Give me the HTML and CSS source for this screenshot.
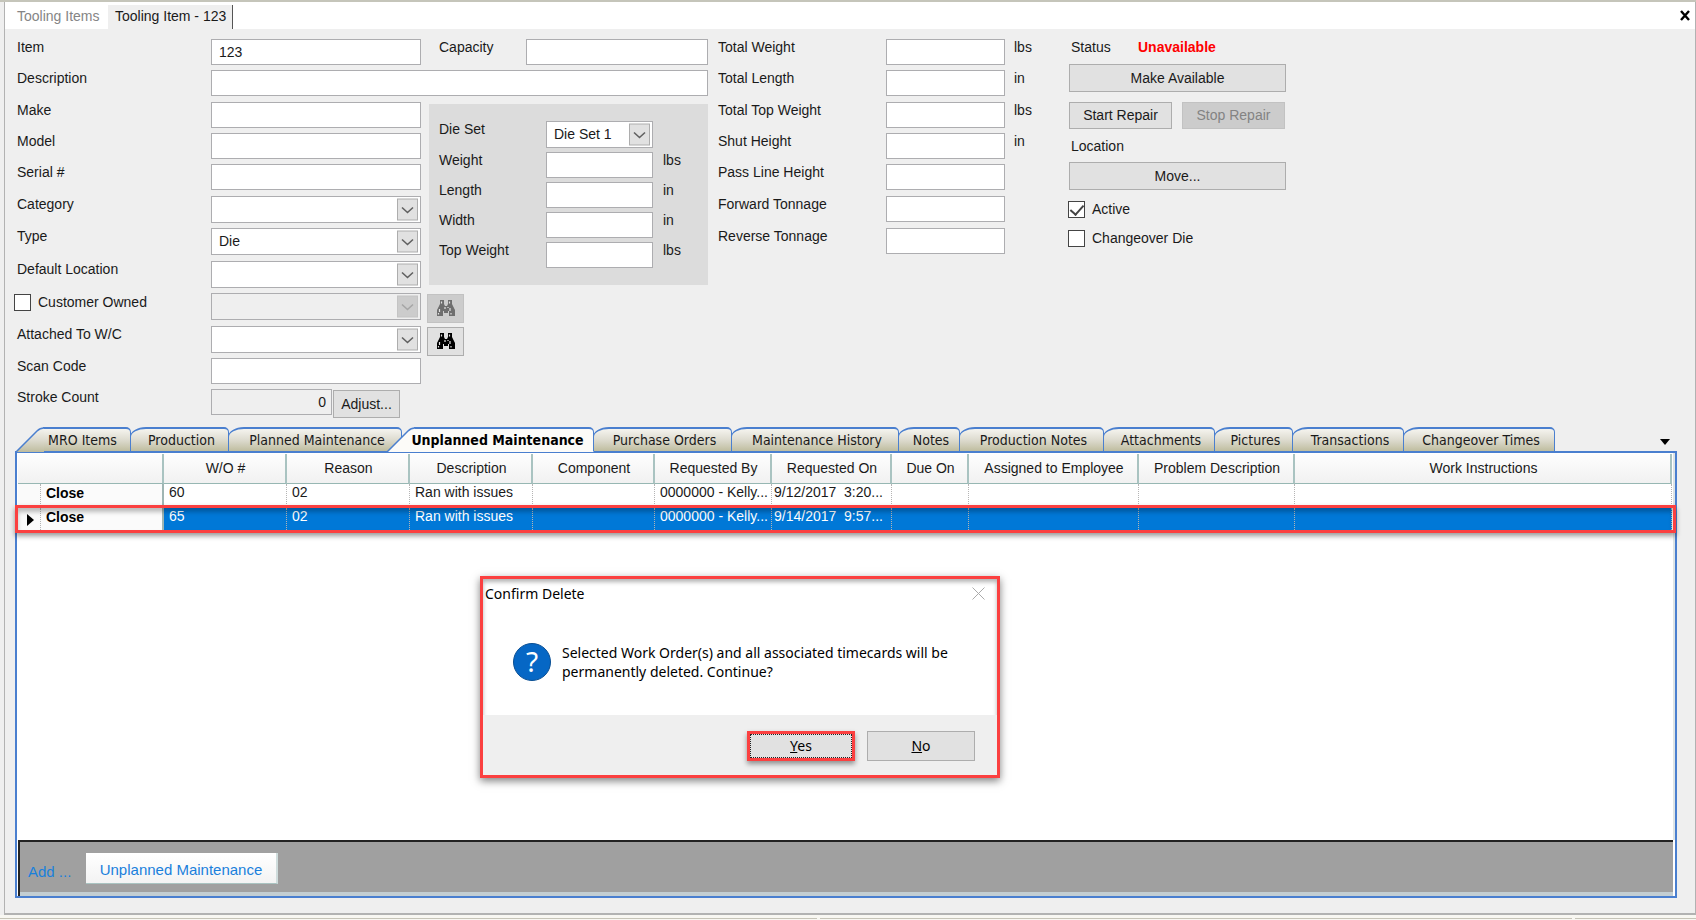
FILE: index.html
```html
<!DOCTYPE html>
<html lang="en">
<head>
<meta charset="utf-8">
<title>Tooling Item - 123</title>
<link rel="stylesheet" href="styles.css">
</head>
<body>
<svg width="0" height="0" class="defs" aria-hidden="true">
  <symbol id="chevron" viewBox="0 0 21 22"><rect x=".5" y=".5" width="20" height="21" fill="var(--box)" stroke="var(--edge)"/><path d="M5 9l5.500 5L16 9" fill="none" stroke="var(--mark)" stroke-width="1.600"/></symbol>
  <symbol id="binoculars" viewBox="0 0 20 17"><path d="M4 0h4v4l1 2h2l1-2V0h4v4l3 6v6h-6v-5h-1v2H8v-2H7v5H1v-6l3-6z"/><path d="M5.500 1.500v2M13.500 1.500v2M3.500 9v3M9 7v2M14 8v3M12 7v1M2.500 13v1.500M15 13v1.500" stroke="#e1e1e1" stroke-width="1.200"/></symbol>
  <linearGradient id="tabfill" x1="0" y1="0" x2="0" y2="1"><stop offset="0" stop-color="#f5f4ef"/><stop offset=".5" stop-color="#dddbcf"/><stop offset="1" stop-color="#bfbd9f"/></linearGradient>
  <symbol id="slant" viewBox="0 0 28 25"><path d="M0 25L21 4Q24 1 28 1V25z" fill="var(--fill)"/><path d="M0 25L21 4Q24 1 28 1" fill="none" stroke="#4a7fcf" stroke-width="1.500"/></symbol>
</svg>
<div class="top-edge"></div>
<div class="frame">
  <nav class="doc-tabs">
    <button class="doc-tab">Tooling Items</button>
    <button class="doc-tab doc-tab-active">Tooling Item - 123</button>
    <button class="doc-close" aria-label="Close"><svg width="12" height="11" viewBox="0 0 12 11"><path d="M2 1l8 9M10 1L2 10" stroke="#000" stroke-width="2.400"/></svg></button>
  </nav>

  <form class="details">
    <div class="rows general">
      <label for="item">Item</label><input id="item" value="123">
      <div class="capacity"><label for="capacity">Capacity</label><input id="capacity"></div>
      <label for="desc">Description</label><input id="desc" class="wide">
      <label for="make">Make</label><input id="make">
      <label for="model">Model</label><input id="model">
      <label for="serial">Serial #</label><input id="serial">
      <label for="category">Category</label>
      <div class="combo"><select id="category"><option></option></select><svg><use href="#chevron"/></svg></div>
      <label for="type">Type</label>
      <div class="combo"><select id="type"><option>Die</option></select><svg><use href="#chevron"/></svg></div>
      <label for="location">Default Location</label>
      <div class="combo"><select id="location"><option></option></select><svg><use href="#chevron"/></svg></div>
      <label class="check owned"><input type="checkbox">Customer Owned</label>
      <div class="combo combo-off"><select aria-label="Customer" disabled><option></option></select><svg><use href="#chevron"/></svg></div>
      <button type="button" class="find" disabled aria-label="Find customer"><svg><use href="#binoculars"/></svg></button>
      <label for="wc">Attached To W/C</label>
      <div class="combo"><select id="wc"><option></option></select><svg><use href="#chevron"/></svg></div>
      <button type="button" class="find" aria-label="Find work center"><svg><use href="#binoculars"/></svg></button>
      <label for="scan">Scan Code</label><input id="scan">
      <label for="stroke">Stroke Count</label>
      <div class="stroke"><input id="stroke" value="0" readonly><button type="button">Adjust...</button></div>

      <fieldset class="die-set">
        <label for="dieset">Die Set</label>
        <div class="combo"><select id="dieset"><option>Die Set 1</option></select><svg><use href="#chevron"/></svg></div><span></span>
        <label for="dw">Weight</label><input id="dw"><span>lbs</span>
        <label for="dl">Length</label><input id="dl"><span>in</span>
        <label for="dwi">Width</label><input id="dwi"><span>in</span>
        <label for="dt">Top Weight</label><input id="dt"><span>lbs</span>
      </fieldset>
    </div>

    <div class="rows totals">
      <label for="tw">Total Weight</label><input id="tw"><span>lbs</span>
      <label for="tl">Total Length</label><input id="tl"><span>in</span>
      <label for="ttw">Total Top Weight</label><input id="ttw"><span>lbs</span>
      <label for="sh">Shut Height</label><input id="sh"><span>in</span>
      <label for="pl">Pass Line Height</label><input id="pl"><span></span>
      <label for="ft">Forward Tonnage</label><input id="ft"><span></span>
      <label for="rt">Reverse Tonnage</label><input id="rt"><span></span>
    </div>

    <div class="status">
      <div class="status-line"><span>Status</span><strong>Unavailable</strong></div>
      <button type="button">Make Available</button>
      <div class="repair"><button type="button">Start Repair</button><button type="button" disabled>Stop Repair</button></div>
      <span class="place">Location</span>
      <button type="button">Move...</button>
      <label class="check"><input type="checkbox" checked>Active</label>
      <label class="check"><input type="checkbox">Changeover Die</label>
    </div>
  </form>

  <section class="work">
    <div class="tabs" role="tablist">
      <button class="tab tab-slant" role="tab"><svg><use href="#slant"/></svg>MRO Items</button>
      <button class="tab" role="tab">Production</button>
      <button class="tab tab-under" role="tab">Planned Maintenance</button>
      <button class="tab tab-slant tab-active" role="tab" aria-selected="true"><svg><use href="#slant"/></svg>Unplanned Maintenance</button>
      <button class="tab" role="tab">Purchase Orders</button>
      <button class="tab" role="tab">Maintenance History</button>
      <button class="tab" role="tab">Notes</button>
      <button class="tab" role="tab">Production Notes</button>
      <button class="tab" role="tab">Attachments</button>
      <button class="tab" role="tab">Pictures</button>
      <button class="tab" role="tab">Transactions</button>
      <button class="tab" role="tab">Changeover Times</button>
      <button class="tab-menu" aria-label="More tabs"><svg width="10" height="6" viewBox="0 0 10 6"><path d="M0 0h10L5 6z"/></svg></button>
    </div>
    <div class="page">
      <div class="sheet">
        <table class="orders">
          <colgroup><col class="c-mark"><col class="c-close"><col class="c-m"><col class="c-m"><col class="c-m"><col class="c-comp"><col class="c-by"><col class="c-on"><col class="c-due"><col class="c-emp"><col class="c-prob"><col></colgroup>
          <thead><tr><th colspan="2"></th><th>W/O #</th><th>Reason</th><th>Description</th><th>Component</th><th>Requested By</th><th>Requested On</th><th>Due On</th><th>Assigned to Employee</th><th>Problem Description</th><th>Work Instructions</th></tr></thead>
          <tbody>
            <tr><td class="mark"></td><td class="act"><button>Close</button></td><td>60</td><td>02</td><td>Ran with issues</td><td></td><td>0000000 - Kelly...</td><td class="date">9/12/2017&nbsp; 3:20...</td><td></td><td></td><td></td><td></td></tr>
            <tr class="selected"><td class="mark"><svg width="7" height="12" viewBox="0 0 7 12"><path d="M0 0l7 6-7 6z"/></svg></td><td class="act"><button>Close</button></td><td>65</td><td>02</td><td>Ran with issues</td><td></td><td>0000000 - Kelly...</td><td class="date">9/14/2017&nbsp; 9:57...</td><td></td><td></td><td></td><td></td></tr>
          </tbody>
        </table>
        <div class="row-callout"></div>
      </div>
      <div class="add-bar"><span>Add ...</span><button>Unplanned Maintenance</button></div>
    </div>
  </section>
</div>
<footer class="status-bar"><span></span><span></span><span></span></footer>

<div class="dialog" role="dialog" aria-labelledby="dlg-title">
  <header class="dialog-head"><span id="dlg-title">Confirm Delete</span><button aria-label="Close"><svg width="13" height="13" viewBox="0 0 13 13"><path d="M.5.5l12 12M12.500.5l-12 12" stroke="#aaa"/></svg></button></header>
  <div class="dialog-body">
    <span class="question">?</span>
    <p>Selected Work Order(s) and all associated timecards will be<br>permanently deleted. Continue?</p>
  </div>
  <footer class="dialog-foot"><button class="yes"><u>Y</u>es</button><button><u>N</u>o</button></footer>
</div>
</body>
</html>
```

FILE: styles.css
```css
* { box-sizing: border-box; }
:root { --blue: #4a7fcf; --line: #adadb0; --box: #e1e1e1; --edge: #adadad; --mark: #606060; --fill: url(#tabfill); }
body {
  margin: 0; min-height: 100vh; display: flex; flex-direction: column; position: relative;
  background: #efefef; color: #1a1a1a; font: 14px/17px "Liberation Sans", Arial, sans-serif;
}
button, input, select { font: inherit; color: inherit; margin: 0; }
button { background: #e1e1e1; border: 1px solid #adadad; padding: 0; white-space: nowrap; }
button:disabled { background: #cccccc; border-color: #c2c2c2; color: #838383; }
.defs { position: absolute; }
.top-edge { height: 2px; background: #c5c5ba; }
.frame { flex: 1; display: flex; flex-direction: column; margin-left: 4px; border: solid #b2b2b2; border-width: 0 1px 2px; }

.doc-tabs { display: flex; height: 27px; background: #fff; padding-top: 3px; }
.doc-tab { background: #fff; border: 0; color: #858585; width: 103px; padding: 0 0 2px 12px; text-align: left; }
.doc-tab-active { background: #efefef; color: #1a1a1a; width: 125px; padding: 0 0 2px 7px; border-right: 1px solid #555; }
.doc-close { margin-left: auto; background: none; border: 0; width: 20px; padding: 0 0 2px; }

.details { display: flex; padding: 10px 0 0 12px; }
.details input:not([type=checkbox]), .combo select {
  width: 100%; height: 26px; border: 1px solid var(--line); border-radius: 0; background: #fff; padding: 0 7px; outline: 0;
}
.rows { display: grid; align-items: start; grid-template-rows: 31px 32px 31px 31px 32px 32px 33px 32px 33px 32px 31px 38px; }
.general { grid-template-columns: 194px 210px 287px; }
.general > label, .owned { grid-column: 1; }
.wide { grid-column: 2 / 4; }
.capacity { display: grid; grid-template-columns: 87px 1fr; padding-left: 18px; }
.combo { position: relative; }
.combo select { appearance: none; height: 27px; display: block; }
.combo svg { position: absolute; right: 3px; top: 2px; width: 21px; height: 23px; pointer-events: none; }
.combo-off { --box: #cccccc; --edge: #c4c4c4; --mark: #a6a6a6; }
.combo-off select { background: #efefef; opacity: 1; }
.check { display: flex; align-items: center; gap: 7px; height: 19px; }
.check input { appearance: none; width: 17px; height: 17px; border: 1px solid #444; background: #fff; }
.check input:checked { position: relative; }
.check input:checked::after { content: ""; position: absolute; left: 4px; top: 0; width: 6px; height: 11px; border: solid #444; border-width: 0 2px 2px 0; transform: rotate(42deg); }
.owned { margin-left: -3px; }
.find { width: 37px; height: 29px; margin: 1px 0 0 6px; display: grid; place-items: center; }
.find svg { width: 20px; height: 17px; }
.find:disabled svg { fill: #6e6e6e; }
.stroke { display: flex; gap: 1px; }
.details .stroke input { width: 121px; background: #efefef; text-align: right; padding-right: 5px; }
.stroke button { width: 67px; height: 28px; margin-top: 1px; }
.die-set {
  grid-column: 3; grid-row: 3 / 9; margin: 2px 0 0 8px; border: 0; min-width: 0; height: 181px; background: #dcdcdc;
  padding: 17px 10px; display: grid; grid-template-columns: 107px 107px 1fr; grid-template-rows: 31px 30px 30px 30px 30px; align-items: start;
}
.die-set span { padding-left: 10px; }
.totals { grid-template-columns: 168px 119px 65px; margin-left: 10px; }
.totals span { padding-left: 9px; }
.status { width: 217px; display: flex; flex-direction: column; align-self: flex-start; margin-left: -1px; }
.status-line { display: grid; grid-template-columns: 67px 1fr; padding-left: 2px; height: 25px; }
.status-line strong { color: #f00; }
.status > button { height: 28px; }
.repair { display: grid; grid-template-columns: 1fr 1fr; gap: 10px; margin: 10px 1px 9px 0; }
.repair button { height: 27px; }
.place { padding-left: 2px; margin-bottom: 7px; }
.status > .check { margin: 10px 0 0 -1px; }

.work { flex: 1; display: flex; flex-direction: column; padding: 0 18px 15px 10px; }
.tabs {
  display: grid; height: 25px; padding-left: 2px; position: relative; margin-bottom: -1px; font: 14px/16px "DejaVu Sans Condensed", "DejaVu Sans", sans-serif;
  grid-template-columns: 114px 98px 159px 206px 138px 167px 61px 144px 111px 78px 111px 151px 1fr;
}
.tab {
  position: relative; margin-left: -1px; border: solid var(--blue); border-width: 2px 1px 1px; border-radius: 16px 5px 0 0 / 10px 5px 0 0;
  background: linear-gradient(#f5f4ef, #dddbcf 50%, #bfbd9f); padding: 0 0 0 4px; height: 25px;
}
.tab-under { margin-right: -14px; }
.tab-slant { z-index: 0; border-left: 0; border-radius: 0 5px 0 0; margin-left: 26px; padding: 0; text-indent: -8px; }
.tab-slant svg { position: absolute; z-index: -1; right: 100%; top: -2px; width: 28px; height: 25px; margin-right: -1px; }
.tab-active { z-index: 1; background: #fcfbf8; --fill: #fcfbf8; font-weight: bold; border-bottom-color: #fcfbf8; padding: 0 8px 0 0; color: #000; text-indent: -4px; }
.tab-menu { background: none; border: 0; justify-self: end; margin-right: 7px; padding: 0; }

.page { flex: 1; display: flex; flex-direction: column; border: 2px solid var(--blue); background: #fff; }
.sheet { flex: 1; position: relative; padding: 1px 1px 0; border-right: 2px solid #dfe5e6; }
.orders { width: 100%; table-layout: fixed; border-collapse: separate; border-spacing: 0; }
.c-mark { width: 23px; } .c-close { width: 123px; } .c-m { width: 123px; } .c-comp { width: 122px; } .c-by { width: 117px; } .c-on { width: 120px; }
.c-due { width: 77px; } .c-emp { width: 170px; } .c-prob { width: 156px; }
.orders th {
  height: 30px; padding: 0 0 0 2px; font-weight: normal; text-align: center; white-space: nowrap; overflow: hidden;
  background: linear-gradient(#fefefe, #f1f1f1); border-right: 2px solid #a9c3c1; border-bottom: 1px solid #97b7b3;
}
.orders td { height: 24px; padding: 0 0 7px 5px; border-right: 1px dotted #b4b4b4; white-space: nowrap; overflow: hidden; vertical-align: top; line-height: 17px; }
.orders .date { padding-left: 2px; }
.orders td.act { padding: 0; border-right: 2px solid #9fb5b3; }
.act button { display: block; width: 100%; height: 24px; text-align: left; padding: 0 0 4px 5px; font-weight: bold; color: #000; border: 0; border-bottom: 1px solid #d4dada; background: #fbfbfb; }
.selected td { background: #0078d7; color: #fff; }
.orders td.mark { background: #fafafa; padding: 6px 0 0 9px; line-height: 0; }
.row-callout { position: absolute; left: -2px; right: -3px; top: 52px; height: 28px; border: 3px solid #fb4040; box-shadow: 0 3px 5px rgba(0,0,0,.4), inset 0 4px 4px rgba(0,0,0,.25); }
.add-bar {
  height: 56px; margin: 0 2px 0 1px; background: #a0a0a0; border: solid #222; border-width: 2px 0 0 2px;
  box-shadow: inset 0 -4px #c3ced2; display: flex; align-items: flex-start; gap: 13px; padding: 11px 0 0 8px; color: #1a80dc; font-size: 15px;
}
.add-bar span { padding-top: 10px; width: 45px; }
.add-bar button { width: 192px; height: 31px; background: linear-gradient(#fff, #f3f3f3); border: 0; border-right: 2px solid #cfdcdc; border-bottom: 1px solid #a9c3c1; padding-top: 2px; }

.status-bar { height: 5px; display: grid; grid-template-columns: 817px 752px 1fr; gap: 3px; background: #f8f7f2; padding-top: 3px; }
.status-bar span { background: #c6c4b8; height: 1px; }

.dialog {
  position: absolute; left: 480px; top: 576px; width: 520px; border: 3px solid #fb4040; background: #fff; color: #000;
  font: 14px/19px "Noto Sans", "Open Sans", sans-serif; box-shadow: 0 3px 8px rgba(0,0,0,.5), inset 0 3px 4px rgba(0,0,0,.3);
}
.dialog-head { display: flex; justify-content: space-between; align-items: center; height: 29px; padding: 0 12px 0 2px; }
.dialog-head button { background: none; border: 0; line-height: 0; }
.dialog-body { display: flex; gap: 11px; padding: 35px 0 0 30px; height: 107px; }
.dialog-body p { margin: 0; white-space: nowrap; }
.question { flex: none; width: 38px; height: 38px; border-radius: 50%; background: #0667c5; border: 1px solid #0a4f94; color: #fff; text-align: center; font-size: 28px; line-height: 35px; }
.dialog-foot { display: flex; justify-content: flex-end; gap: 12px; height: 60px; padding: 16px 22px; background: #efefef; }
.dialog-foot button { width: 108px; height: 30px; padding-bottom: 2px; }
.dialog-foot .yes { border: 3px solid #fb4040; outline: 1px dotted #222; outline-offset: -4px; box-shadow: 0 3px 5px rgba(0,0,0,.4); }
```
